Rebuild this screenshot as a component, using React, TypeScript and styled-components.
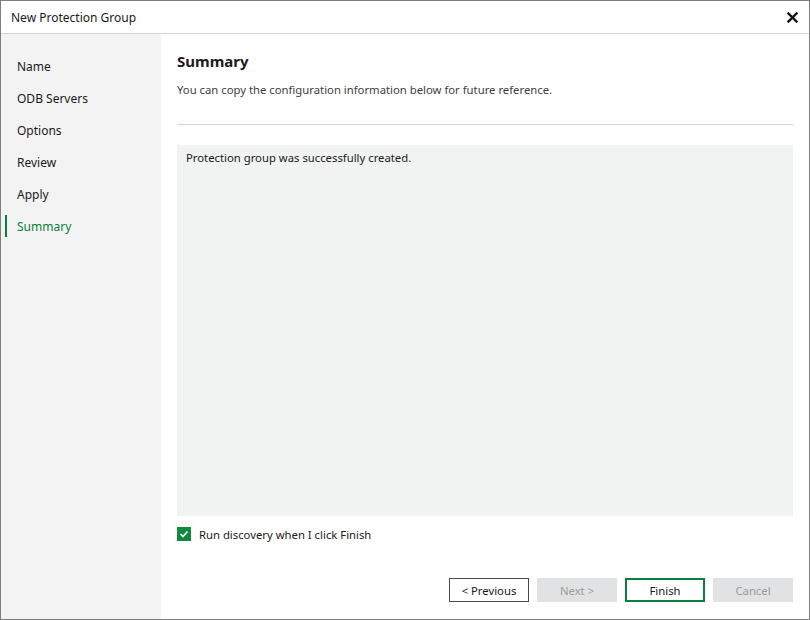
import React from "react";
import styled, { createGlobalStyle } from "styled-components";

const Global = createGlobalStyle`
  html, body { margin: 0; padding: 0; background: #ffffff; }
  body { font-family: "Noto Sans", "Open Sans", sans-serif; font-size: 12px; color: #1a1a1a; }
  * { box-sizing: border-box; }
`;

const Window = styled.div`
  width: 810px;
  height: 620px;
  border: 1px solid #7d7d7d;
  display: flex;
  flex-direction: column;
  background: #fff;
`;

const TitleBar = styled.div`
  height: 33px;
  flex: 0 0 33px;
  display: flex;
  align-items: center;
  justify-content: space-between;
  padding: 0 10px 0 10px;
  border-bottom: 1px solid #d4d4d4;
`;

const Title = styled.div`
  font-size: 12px;
  color: #1a1a1a;
`;

const CloseBtn = styled.div`
  width: 14px;
  height: 14px;
  display: flex;
  align-items: center;
  justify-content: center;
`;

const Body = styled.div`
  flex: 1;
  display: flex;
  min-height: 0;
`;

const Sidebar = styled.nav`
  width: 160px;
  flex: 0 0 160px;
  background: #f2f3f2;
  padding-top: 16px;
  display: flex;
  flex-direction: column;
`;

const NavItem = styled.div<{ $active?: boolean }>`
  height: 32px;
  display: flex;
  align-items: center;
  padding-left: 16px;
  position: relative;
  color: ${(p) => (p.$active ? "#0a7f3a" : "#1a1a1a")};
  &::before {
    content: "";
    display: ${(p) => (p.$active ? "block" : "none")};
    position: absolute;
    left: 4px;
    top: 5px;
    bottom: 5px;
    width: 2px;
    background: #0a7f3a;
  }
`;

const Content = styled.main`
  flex: 1;
  display: flex;
  flex-direction: column;
  padding: 16px 16px 17px 16px;
`;

const Heading = styled.h1`
  margin: 0;
  font-size: 15px;
  font-weight: 700;
  line-height: 22px;
  color: #1a1a1a;
`;

const Subtitle = styled.p`
  margin: 10px 0 0 0;
  font-size: 11.3px;
  line-height: 16px;
  color: #404040;
`;

const Divider = styled.hr`
  margin: 26px 0 0 0;
  border: 0;
  border-top: 1px solid #d4d4d4;
  height: 0;
`;

const InfoBox = styled.div`
  margin-top: 20px;
  height: 371px;
  background: #f1f2f2;
  padding: 5px 9px;
  font-size: 11.3px;
  line-height: 16px;
  color: #1a1a1a;
`;

const CheckRow = styled.label`
  margin-top: 10px;
  display: flex;
  align-items: center;
  gap: 8px;
  font-size: 11.3px;
  height: 16px;
`;

const CheckBox = styled.span`
  width: 14px;
  height: 14px;
  background: #0c8a3e;
  display: inline-flex;
  align-items: center;
  justify-content: center;
`;

const Footer = styled.div`
  margin-top: auto;
  display: flex;
  justify-content: flex-end;
  gap: 8px;
`;

const Button = styled.button<{ $variant?: "default" | "primary" | "disabled" }>`
  width: 80px;
  height: 24px;
  font-family: inherit;
  font-size: 11.3px;
  background: ${(p) => (p.$variant === "disabled" ? "#e1e2e3" : "#ffffff")};
  color: ${(p) => (p.$variant === "disabled" ? "#9a9a9a" : "#1a1a1a")};
  border: ${(p) =>
    p.$variant === "primary"
      ? "2px solid #0a7f3a"
      : p.$variant === "disabled"
      ? "1px solid #e1e2e3"
      : "1px solid #4a4a4a"};
  padding: 0;
  cursor: default;
`;

const steps = ["Name", "ODB Servers", "Options", "Review", "Apply", "Summary"];

export default function App() {
  return (
    <>
      <Global />
      <Window>
        <TitleBar>
          <Title>New Protection Group</Title>
          <CloseBtn>
            <svg width="11" height="11" viewBox="0 0 11 11">
              <path d="M1.5 1.5 L9.5 9.5 M9.5 1.5 L1.5 9.5" stroke="#111" strokeWidth="2.4" strokeLinecap="square" />
            </svg>
          </CloseBtn>
        </TitleBar>
        <Body>
          <Sidebar>
            {steps.map((s) => (
              <NavItem key={s} $active={s === "Summary"}>
                {s}
              </NavItem>
            ))}
          </Sidebar>
          <Content>
            <Heading>Summary</Heading>
            <Subtitle>You can copy the configuration information below for future reference.</Subtitle>
            <Divider />
            <InfoBox>Protection group was successfully created.</InfoBox>
            <CheckRow>
              <CheckBox>
                <svg width="10" height="10" viewBox="0 0 10 10">
                  <path d="M1.5 5 L4 7.5 L8.5 2.5" stroke="#fff" strokeWidth="1.6" fill="none" />
                </svg>
              </CheckBox>
              Run discovery when I click Finish
            </CheckRow>
            <Footer>
              <Button $variant="default">&lt; Previous</Button>
              <Button $variant="disabled">Next &gt;</Button>
              <Button $variant="primary">Finish</Button>
              <Button $variant="disabled">Cancel</Button>
            </Footer>
          </Content>
        </Body>
      </Window>
    </>
  );
}
